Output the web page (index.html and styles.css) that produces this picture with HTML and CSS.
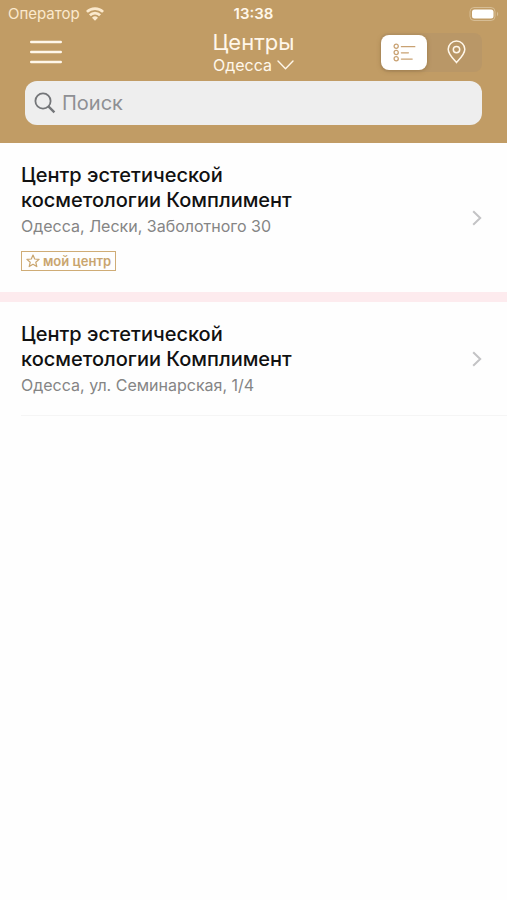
FILE: index.html
```html
<!DOCTYPE html>
<html lang="ru">
<head>
<meta charset="utf-8">
<meta name="viewport" content="width=device-width, initial-scale=1">
<title>Центры</title>
<link rel="stylesheet" href="styles.css">
</head>
<body>
<header class="header">
  <div class="status">
    <div class="carrier">
      <span>Оператор</span>
      <svg width="18" height="14" viewBox="0 0 18 14" fill="none" stroke="currentColor" stroke-width="2.7" aria-hidden="true">
        <path d="M.9 4.9a11.6 11.6 0 0 1 16.2 0M3.9 8.3a7.2 7.2 0 0 1 10.2 0"/>
        <path d="M9 13.8 6 10.8a4.3 4.3 0 0 1 6 0z" fill="currentColor" stroke="none"/>
      </svg>
    </div>
    <time class="clock">13:38</time>
    <svg class="battery" width="30" height="14" viewBox="0 0 30 14" aria-hidden="true">
      <rect x="1" y=".5" width="25" height="13" rx="4" fill="none" stroke="#d6bd95"/>
      <rect x="3" y="2.5" width="21.5" height="9" rx="2.5" fill="#fff"/>
      <path d="M28 4.8c1.6.8 1.6 3.6 0 4.4z" fill="#d6bd95"/>
    </svg>
  </div>
  <nav class="nav">
    <button class="menu" type="button" aria-label="Меню">
      <svg width="32" height="24" viewBox="0 0 32 24" stroke="currentColor" stroke-width="2.4" stroke-linecap="round" aria-hidden="true"><path d="M1.2 2h29.6M1.2 12h29.6M1.2 22h29.6"/></svg>
    </button>
    <div class="heading">
      <h1 class="title">Центры</h1>
      <button class="city" type="button">Одесса
        <svg width="17" height="10" viewBox="0 0 17 10" fill="none" stroke="currentColor" stroke-width="1.4" stroke-linecap="round" stroke-linejoin="round" aria-hidden="true"><path d="m1 1 7.5 7.8L16 1"/></svg>
      </button>
    </div>
    <div class="switch">
      <button class="mode mode-active" type="button" aria-label="Список">
        <svg width="23" height="19" viewBox="0 0 23 19" fill="none" stroke="currentColor" stroke-width="1.3" stroke-linecap="round" aria-hidden="true"><circle cx="3.2" cy="3.2" r="2.1"/><circle cx="3.2" cy="9.5" r="2.1"/><circle cx="3.2" cy="15.8" r="2.1"/><path d="M8.4 3.7h13.4M8.4 9.8h7M8.4 16.1h10.8"/></svg>
      </button>
      <button class="mode" type="button" aria-label="Карта">
        <svg width="19" height="24" viewBox="0 0 19 24" fill="none" stroke="currentColor" stroke-width="1.5" aria-hidden="true"><path d="M9.5 22.5C6.8 19.4 1.2 14.4 1.2 9.3a8.3 8.3 0 0 1 16.6 0c0 5.1-5.6 10.1-8.3 13.2z"/><circle cx="9.5" cy="9.6" r="3.2"/></svg>
      </button>
    </div>
  </nav>
  <label class="search">
    <svg width="22" height="22" viewBox="0 0 22 22" fill="none" stroke="currentColor" stroke-width="1.8" aria-hidden="true"><circle cx="9" cy="9" r="7.6"/><path d="m14.4 14.4 6 6" stroke-width="2.4"/></svg>
    <input class="search-input" type="search" placeholder="Поиск" aria-label="Поиск">
  </label>
</header>
<main>
  <a class="center center-mine" href="#zabolotnogo">
    <div class="info">
      <h2 class="name">Центр эстетической косметологии Комплимент</h2>
      <p class="address">Одесса, Лески, Заболотного 30</p>
      <span class="tag">
        <svg width="14" height="14" viewBox="0 0 14 14" fill="none" stroke="currentColor" stroke-width="1.2" stroke-linejoin="round" aria-hidden="true"><path d="m7 1 1.7 4 4.4.4-3.3 2.9 1 4.3L7 10.3l-3.8 2.3 1-4.3L.9 5.4 5.3 5z"/></svg>
        мой центр
      </span>
    </div>
    <svg class="arrow" width="10" height="16" viewBox="0 0 10 16" fill="none" stroke="currentColor" stroke-width="2" aria-hidden="true"><path d="m1.2 1.2 7 6.8-7 6.8"/></svg>
  </a>
  <a class="center" href="#seminarskaya">
    <div class="info">
      <h2 class="name">Центр эстетической косметологии Комплимент</h2>
      <p class="address">Одесса, ул. Семинарская, 1/4</p>
    </div>
    <svg class="arrow" width="10" height="16" viewBox="0 0 10 16" fill="none" stroke="currentColor" stroke-width="2" aria-hidden="true"><path d="m1.2 1.2 7 6.8-7 6.8"/></svg>
  </a>
  <hr class="divider">
</main>
</body>
</html>
```
FILE: styles.css
```css
* {
  box-sizing: border-box;
}

body {
  margin: 0;
  background: #fefefe;
  font-family: Inter, "Liberation Sans", sans-serif;
}

button {
  padding: 0;
  border: 0;
  background: none;
  color: inherit;
  font: inherit;
}

h1, h2, p {
  margin: 0;
  font-weight: 400;
}

svg {
  display: block;
  flex: none;
}

.header {
  padding-bottom: 18px;
  background: #c19c65;
  color: #fff7ea;
}

.status {
  display: grid;
  grid-template-columns: 1fr auto 1fr;
  align-items: center;
  height: 27px;
  padding: 0 8px;
  font-size: 15px;
}

.carrier {
  display: flex;
  align-items: center;
  gap: 6px;
  color: #fbe9cd;
}

.clock {
  font-weight: 600;
}

.battery {
  justify-self: end;
}

.nav {
  display: grid;
  grid-template-columns: 1fr auto 1fr;
  align-items: center;
  height: 54px;
  padding: 0 25px 4px;
}

.menu {
  justify-self: start;
  margin-left: 5px;
}

.heading {
  display: flex;
  flex-direction: column;
  align-items: center;
}

.title {
  font-size: 22px;
  line-height: 25px;
}

.city {
  display: flex;
  align-items: center;
  gap: 5px;
  font-size: 16px;
  line-height: 20px;
}

.switch {
  display: flex;
  justify-self: end;
  gap: 4px;
  padding: 2px 1px;
  border-radius: 8px;
  background: #b99767;
}

.mode {
  display: grid;
  place-items: center;
  width: 50px;
  height: 35px;
}

.mode-active {
  width: 46px;
  border-radius: 8px;
  background: #fff;
  box-shadow: 0 1px 4px #80603080;
  color: #c9a273;
}

.search {
  display: flex;
  align-items: center;
  gap: 6px;
  height: 44px;
  margin: 0 25px;
  padding: 0 9px;
  border-radius: 12px;
  background: #eee;
  color: #747679;
}

.search-input {
  flex: 1;
  min-width: 0;
  padding: 0;
  border: 0;
  outline: 0;
  background: none;
  color: #333;
  font: 20px/26px Inter, "Liberation Sans", sans-serif;
}

.search-input::placeholder {
  color: #8e9094;
}

.center {
  display: flex;
  align-items: center;
  justify-content: space-between;
  padding: 20px 25px 20px 21px;
  color: #111;
  text-decoration: none;
}

.center-mine {
  border-bottom: 10px solid #fdebee;
}

.info {
  max-width: 300px;
}

.name {
  font-size: 20px;
  font-weight: 500;
  line-height: 25px;
}

.address {
  margin-top: 3px;
  color: #858585;
  font-size: 16px;
  line-height: 20px;
}

.tag {
  display: inline-flex;
  align-items: center;
  gap: 3px;
  height: 20px;
  margin-top: 15px;
  padding: 0 4px;
  border: 1px solid #cfac76;
  color: #c9a56e;
  font-size: 13px;
  font-weight: 600;
}

.arrow {
  color: #c3c3c5;
}

.divider {
  height: 1px;
  margin: 0 0 0 21px;
  border: 0;
  background: #f5f5f5;
}
```
